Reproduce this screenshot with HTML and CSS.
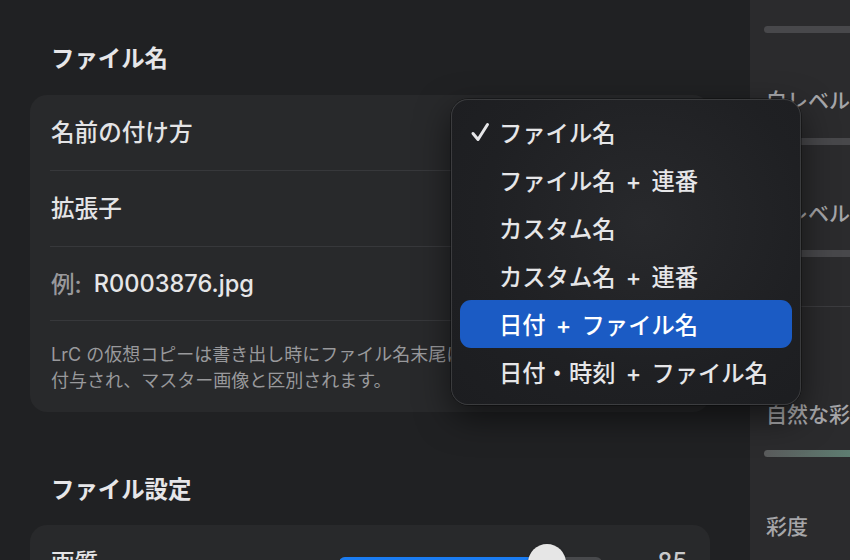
FILE: index.html
```html
<!DOCTYPE html>
<html lang="ja">
<head>
<meta charset="utf-8">
<title>書き出し設定</title>
<link rel="stylesheet" href="styles.css">
</head>
<body>
<div class="app">
  <main class="main">
    <h2 class="sec-title">ファイル名</h2>
    <section class="card">
      <div class="row"><span class="label">名前の付け方</span></div>
      <div class="sep"></div>
      <div class="row"><span class="label">拡張子</span></div>
      <div class="sep"></div>
      <div class="row row-example"><span class="ex-key">例:</span><span class="ex-val">R0003876.jpg</span></div>
      <div class="sep"></div>
      <p class="note">LrC の仮想コピーは書き出し時にファイル名末尾に「-1」などの番号が<br>付与され、マスター画像と区別されます。</p>
    </section>

    <h2 class="sec-title sec-title-2">ファイル設定</h2>
    <section class="card">
      <div class="row">
        <span class="label">画質</span>
        <div class="slider">
          <div class="slider-fill" style="width: 79%"></div>
          <div class="slider-thumb" style="left: 79%"></div>
        </div>
        <span class="slider-val">85</span>
      </div>
    </section>
  </main>

  <aside class="rpanel">
    <div class="rp-label rp-first">シャドウ</div>
    <div class="rp-track rp-t1"></div>
    <div class="rp-label rp-l1">白レベル</div>
    <div class="rp-track rp-t2"></div>
    <div class="rp-label rp-l2">黒レベル</div>
    <div class="rp-track rp-t3"></div>
    <div class="rp-sep"></div>
    <div class="rp-label rp-l3">自然な彩度</div>
    <div class="rp-track rp-grad"></div>
    <div class="rp-label rp-l4">彩度</div>
  </aside>
</div>

<div class="menu">
  <div class="item"><span class="check"><svg width="20" height="20" viewBox="0 0 20 20"><path d="M3 11.5 L8 17.5 L17.5 2.5" fill="none" stroke="#e6e6e8" stroke-width="3" stroke-linecap="round" stroke-linejoin="round"/></svg></span><span>ファイル名</span></div>
  <div class="item"><span class="check"></span><span>ファイル名 + 連番</span></div>
  <div class="item"><span class="check"></span><span>カスタム名</span></div>
  <div class="item"><span class="check"></span><span>カスタム名 + 連番</span></div>
  <div class="item item-active"><span class="check"></span><span>日付 + ファイル名</span></div>
  <div class="item"><span class="check"></span><span>日付・時刻 + ファイル名</span></div>
</div>
</body>
</html>
```
FILE: styles.css
```css
html, body {
  margin: 0;
  padding: 0;
  width: 850px;
  height: 560px;
  overflow: hidden;
  background: #202123;
  font-family: "Inter", "Noto Sans CJK JP", sans-serif;
  color: #e4e4e6;
}

.app {
  display: flex;
  width: 850px;
  height: 560px;
}

.main {
  width: 750px;
  flex: none;
  box-sizing: border-box;
  padding: 44px 40px 0 30px;
  background: #202123;
}

.sec-title {
  margin: 0 0 21px 21px;
  font-size: 23.4px;
  line-height: 30px;
  font-weight: 600;
  color: #e6e6e8;
}

.sec-title-2 {
  margin-top: 63px;
  margin-bottom: 20px;
}

.card {
  background: #28292b;
  border-radius: 17px;
}

.row {
  height: 75px;
  box-sizing: border-box;
  display: flex;
  align-items: center;
  padding: 0 20px 3px 21px;
}

.row-example {
  height: 73px;
  padding-bottom: 1px;
}

.label {
  font-size: 23.6px;
  font-weight: 500;
  color: #e4e4e6;
  flex: 1;
}

.ex-key {
  font-size: 23.6px;
  font-weight: 500;
  color: #98989b;
  margin-right: 12px;
}

.ex-val {
  font-size: 23.6px;
  font-weight: 500;
  color: #e6e6e8;
}

.sep {
  height: 1px;
  background: #37383b;
  margin: 0 20px;
}

.note {
  margin: 0;
  padding: 21px 20px 18px 21px;
  font-size: 18px;
  line-height: 26px;
  color: #99999c;
  white-space: nowrap;
  overflow: hidden;
}

.slider {
  position: relative;
  width: 263px;
  height: 12px;
  margin-top: 3px;
  border-radius: 6px;
  background: #48494c;
}

.slider-fill {
  height: 12px;
  border-radius: 6px;
  background: #1a7cf2;
}

.slider-thumb {
  position: absolute;
  top: -13px;
  width: 38px;
  height: 38px;
  margin-left: -19px;
  border-radius: 19px;
  background: #e6e6e6;
  box-shadow: 0 1px 3px rgba(0,0,0,0.4);
}

.slider-val {
  width: 88px;
  text-align: right;
  padding-right: 3px;
  box-sizing: border-box;
  font-size: 23.6px;
  font-weight: 500;
  color: #c9c9cb;
}

/* right panel */
.rpanel {
  flex: 1;
  background: #2b2b2d;
  padding-left: 16px;
  overflow: hidden;
  white-space: nowrap;
}

.rp-label {
  font-size: 21px;
  line-height: 28px;
  font-weight: 500;
  color: #a6a6a9;
}

.rp-track {
  height: 7px;
  border-radius: 4px;
  margin-left: -2px;
  width: 200px;
  background: #48484b;
}

.rp-first { margin-top: -24px; }
.rp-t1 { margin-top: 22px; }
.rp-l1 { margin-top: 54px; }
.rp-t2 { margin-top: 23px; }
.rp-l2 { margin-top: 55px; }
.rp-t3 { margin-top: 22px; }

.rp-sep {
  margin-top: 49px;
  height: 1px;
  background: #3c3c3f;
  margin-left: -16px;
}

.rp-l3 { margin-top: 94px; }

.rp-grad {
  margin-top: 21px;
  background: linear-gradient(90deg, #5a5b5c 0%, #5f8a79 100%);
  width: 120px;
}

.rp-l4 { margin-top: 56px; }

/* popup menu */
.menu {
  position: absolute;
  left: 451px;
  top: 99px;
  width: 350px;
  box-sizing: border-box;
  padding: 8px 8px;
  border-radius: 17px;
  border: 1px solid rgba(255,255,255,0.13);
  background: radial-gradient(ellipse at 55% 40%, #28292c 0%, #1f2023 60%, #1c1d20 100%);
  box-shadow: 0 12px 34px rgba(0,0,0,0.55), 0 0 0 0.5px rgba(0,0,0,0.6);
}

.item {
  height: 48px;
  display: flex;
  align-items: center;
  padding-left: 10px;
  border-radius: 11px;
  font-size: 23.3px;
  font-weight: 500;
  word-spacing: 4px;
  color: #e6e6e8;
  white-space: nowrap;
}

.check {
  width: 29px;
  height: 20px;
  flex: none;
  display: flex;
  align-items: center;
}

.check svg {
  display: block;
}

.item-active {
  background: #1b5bc4;
  color: #ffffff;
}
```
